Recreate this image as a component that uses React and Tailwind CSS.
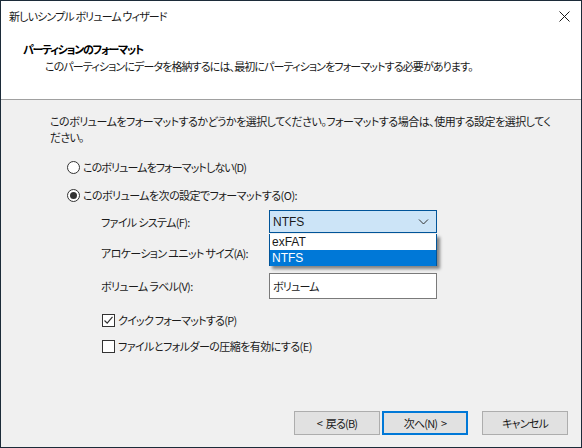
const jp = { fontFamily: '"Noto Sans CJK JP", "Liberation Sans", sans-serif', fontFeatureSettings: '"palt"' };
const latin = { fontFamily: '"Liberation Sans", sans-serif' };

function Radio({ checked, children, className }) {
  return (
    <div className={`flex items-center gap-[3px] h-[18px] ${className}`}>
      <span className="w-[13px] h-[13px] rounded-full border border-[#333333] bg-white flex items-center justify-center">
        {checked && <span className="w-[7px] h-[7px] rounded-full bg-[#333333]" />}
      </span>
      {children}
    </div>
  );
}

function Check({ checked, children, className }) {
  return (
    <div className={`flex items-center gap-[3px] h-[18px] ${className}`}>
      <span className="w-[13px] h-[13px] border border-[#333333] bg-white flex items-center justify-center">
        {checked && (
          <svg width="11" height="11" viewBox="0 0 11 11" fill="none">
            <path d="M1.5 5.5 L4.2 8.2 L9.5 1.8" stroke="#333333" strokeWidth="1.2" />
          </svg>
        )}
      </span>
      {children}
    </div>
  );
}

function Button({ primary, children }) {
  return (
    <div className={`w-[86px] h-[24px] flex items-center justify-center bg-[#e1e1e1] text-[#1a1a1a] [word-spacing:2px] ${primary ? "border-2 border-[#0078d7]" : "border border-[#adadad]"}`}>
      {children}
    </div>
  );
}

export default function App() {
  return (
    <div style={jp} className="w-[582px] h-[448px] border border-[#1c2b39] flex flex-col bg-[#f0f0f0] text-[11px] tracking-[-0.8px] leading-[16px] text-[#1a1a1a] overflow-hidden">
      <div className="h-[98px] bg-white border-b border-[#a0a0a0] box-content flex flex-col">
        <div className="h-[30px] pl-[8px] flex items-center justify-between">
          <span className="tracking-[-0.85px]">新しいシンプル ボリューム ウィザード</span>
          <svg className="mr-[11px]" width="11" height="11" viewBox="0 0 11 11" fill="none">
            <path d="M0.5 0.5 L10.5 10.5 M10.5 0.5 L0.5 10.5" stroke="#1a1a1a" strokeWidth="1" />
          </svg>
        </div>
        <div className="pl-[22px] pt-[10px] font-bold leading-[17px] text-black tracking-[-1.3px]">パーティションのフォーマット</div>
        <div className="pl-[44px] leading-[16px] tracking-[-0.88px]">このパーティションにデータを格納するには、最初にパーティションをフォーマットする必要があります。</div>
      </div>
      <div className="flex-1 flex flex-col">
        <div className="pl-[49px] pt-[13px] leading-[16px]">
          <div className="whitespace-nowrap tracking-[-0.5px]">このボリュームをフォーマットするかどうかを選択してください。フォーマットする場合は、使用する設定を選択してく</div>
          <div>ださい。</div>
        </div>
        <Radio className="ml-[66px] mt-[13px]"><span className="tracking-[-0.9px]">このボリュームをフォーマットしない(D)</span></Radio>
        <Radio checked className="ml-[66px] mt-[10px]"><span className="tracking-[-0.55px]">このボリュームを次の設定でフォーマットする(O):</span></Radio>
        <div className="ml-[100px] mt-[6px] w-[336px] grid grid-cols-[168px_168px] gap-y-[8px] relative">
          <div className="flex items-center tracking-[-0.65px]">ファイル システム(F):</div>
          <div className="h-[23px] border border-[#005499] bg-[#cce4f7] flex items-center justify-between pl-[3px] pr-[7px]">
            <span style={latin} className="text-[12px] tracking-normal">NTFS</span>
            <svg width="11" height="6" viewBox="0 0 11 6" fill="none"><path d="M1 0.5 L5.5 5 L10 0.5" stroke="#333" strokeWidth="1" /></svg>
          </div>
          <div className="h-[24px] whitespace-nowrap flex items-center tracking-[-0.65px]">アロケーション ユニット サイズ(A):</div>
          <div className="h-[24px]" />
          <div className="h-[26px] flex items-center tracking-[-0.65px]">ボリューム ラベル(V):</div>
          <div className="h-[26px] border border-[#7a7a7a] bg-white pl-[3px] flex items-center">ボリューム</div>
          <div className="absolute left-[168px] top-[24px] w-[168px] h-[32px] border border-[#005499] border-t-0 bg-white shadow-[3px_3px_3px_rgba(0,0,0,0.45)] text-[12px] tracking-normal" style={latin}>
            <div className="h-[16px] pl-[2px] flex items-center">exFAT</div>
            <div className="h-[16px] pl-[2px] flex items-center bg-[#0078d7] text-white">NTFS</div>
          </div>
        </div>
        <Check checked className="ml-[101px] mt-[12px]"><span className="tracking-[-0.75px]">クイック フォーマットする(P)</span></Check>
        <Check className="ml-[101px] mt-[8px]"><span className="tracking-[-0.55px]">ファイルとフォルダーの圧縮を有効にする(E)</span></Check>
        <div className="mt-auto mb-[12px] mr-[13px] flex justify-end">
          <Button>&lt; 戻る(B)</Button>
          <div className="ml-[2px]"><Button primary>次へ(N) &gt;</Button></div>
          <div className="ml-[14px]"><Button>キャンセル</Button></div>
        </div>
      </div>
    </div>
  );
}
